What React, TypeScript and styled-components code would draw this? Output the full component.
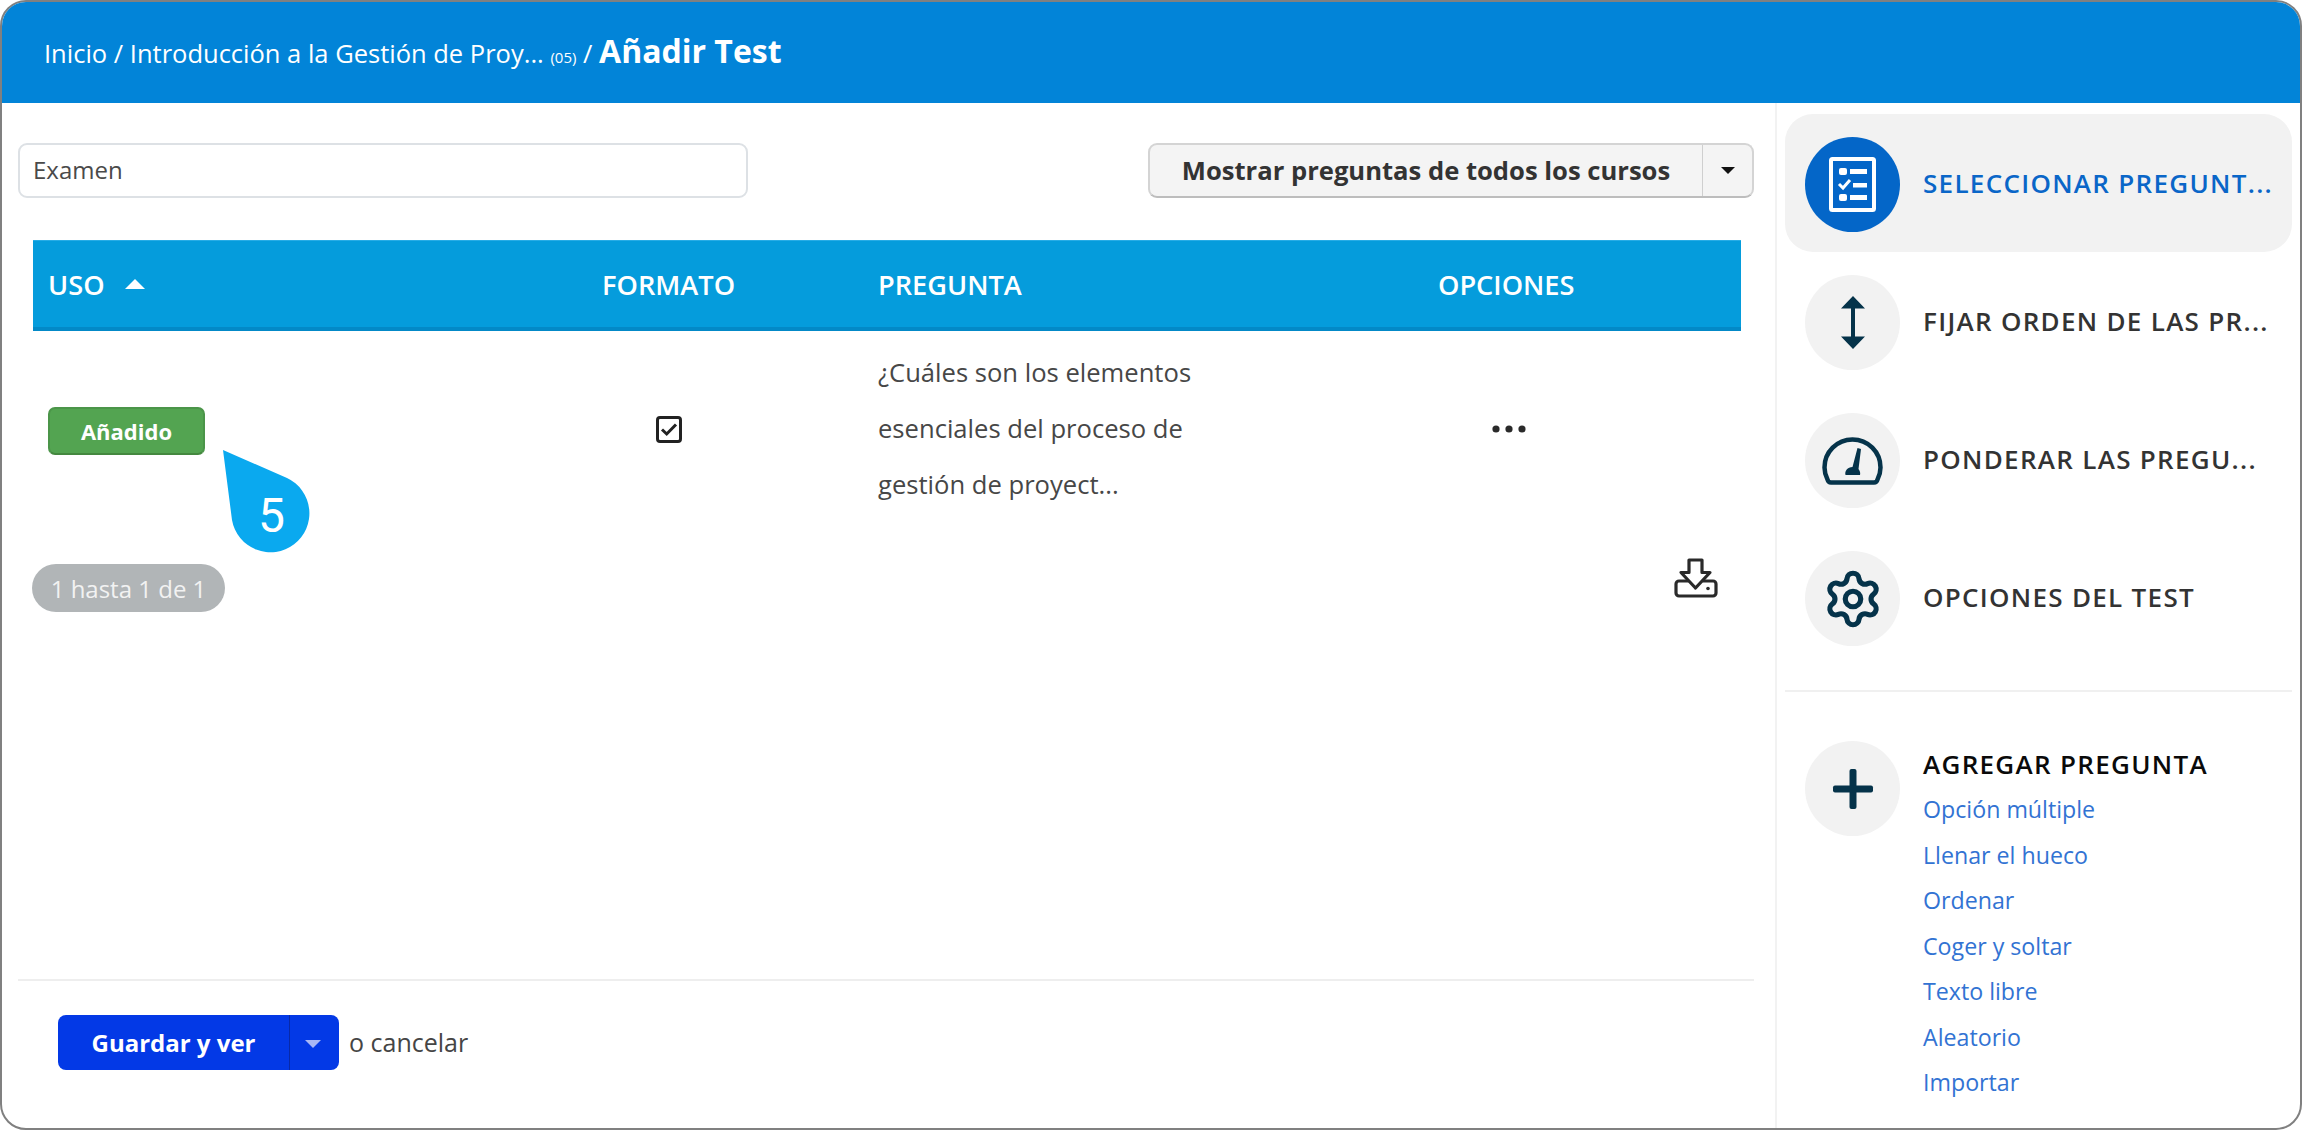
import styled, { createGlobalStyle } from "styled-components";
import { Settings } from "lucide-react";

const GlobalStyle = createGlobalStyle`
  html, body {
    margin: 0;
    padding: 0;
    background: #ffffff;
  }
  * {
    box-sizing: border-box;
  }
`;

const Frame = styled.div`
  width: 2302px;
  height: 1130px;
  border: 2px solid #808080;
  border-radius: 26px;
  overflow: hidden;
  display: flex;
  flex-direction: column;
  background: #fff;
  font-family: "Open Sans", sans-serif;
  color: #3b3b3b;
`;

const Header = styled.header`
  height: 101px;
  flex: none;
  background: #0284d8;
  color: #fff;
  display: flex;
  align-items: center;
  padding: 0 0 0 42px;
  font-size: 25.5px;
  white-space: pre;
`;

const Count = styled.span`
  font-size: 15px;
  margin-top: 8px;
`;

const CurrentPage = styled.strong`
  font-size: 32px;
  font-weight: 700;
  margin-top: -4px;
`;

const Body = styled.div`
  flex: 1;
  display: flex;
  min-height: 0;
`;

const Main = styled.main`
  width: 1773px;
  flex: none;
  padding: 40px 21px 0 16px;
  display: flex;
  flex-direction: column;
  position: relative;
`;

const Toolbar = styled.div`
  display: flex;
  justify-content: space-between;
  height: 55px;
  flex: none;
`;

const SearchInput = styled.div`
  width: 730px;
  height: 55px;
  border: 2px solid #dde1e5;
  border-radius: 9px;
  padding-left: 13px;
  font-size: 24px;
  line-height: 49px;
  color: #4a4a4a;
`;

const SplitButton = styled.div`
  display: flex;
  width: 606px;
  height: 55px;
  border: 2px solid #d4d4d4;
  border-bottom-color: #bdbdbd;
  border-radius: 9px;
  background: #f4f4f4;
  font-size: 25.6px;
  font-weight: 700;
  color: #333;
`;

const SplitLabel = styled.div`
  flex: 1;
  display: flex;
  align-items: center;
  justify-content: center;
`;

const SplitCaret = styled.div`
  width: 50px;
  border-left: 1px solid #cfcfcf;
  display: flex;
  align-items: center;
  justify-content: center;
`;

const Caret = styled.span<{ $color: string; $size: number }>`
  width: 0;
  height: 0;
  border-left: ${(p) => p.$size}px solid transparent;
  border-right: ${(p) => p.$size}px solid transparent;
  border-top: ${(p) => p.$size}px solid ${(p) => p.$color};
`;

const Table = styled.div`
  margin: 42px 13px 0 15px;
  display: grid;
  grid-template-columns: 554px 276px 560px 1fr;
`;

const HeadCell = styled.div`
  height: 91px;
  background: #059cdc;
  border-top: 1px solid #27ace6;
  border-bottom: 4px solid #0389c7;
  color: #fff;
  font-size: 27.2px;
  font-weight: 600;
  display: flex;
  align-items: center;
  gap: 20px;
  padding: 0 0 0 15px;
`;

const SortArrow = styled.span`
  width: 0;
  height: 0;
  border-left: 10px solid transparent;
  border-right: 10px solid transparent;
  border-bottom: 10px solid #fff;
`;

const RowCell = styled.div`
  height: 214px;
  display: flex;
  align-items: center;
  padding: 0 0 18px 15px;
`;

const FormatCell = styled(RowCell)`
  padding-left: 69px;
`;

const OptionsCell = styled(RowCell)`
  padding-left: 69px;
`;

const QuestionText = styled.div`
  width: 340px;
  font-size: 25.6px;
  line-height: 56px;
  color: #474747;
`;

const AddedBadge = styled.div`
  width: 157px;
  height: 48px;
  margin-top: 4px;
  border-radius: 7px;
  background: #53a451;
  border: 2px solid #4b9549;
  border-bottom-color: #44883f;
  color: #fff;
  font-size: 22px;
  font-weight: 700;
  display: flex;
  align-items: center;
  justify-content: center;
`;

const StepBubble = styled.div`
  position: absolute;
  left: 221px;
  top: 347px;
  width: 87px;
  height: 103px;
`;

const StepNumber = styled.span`
  position: absolute;
  left: 35px;
  top: 38px;
  color: #fff;
  font-family: Roboto, sans-serif;
  font-size: 48px;
  line-height: 56px;
  font-weight: 400;
`;

const Pager = styled.div`
  display: flex;
  justify-content: space-between;
  margin: 19px 0 0 14px;
  padding-right: 36px;
`;

const RangePill = styled.div`
  width: 193px;
  height: 48px;
  border-radius: 24px;
  background: #b1b5b7;
  color: #f2f2f2;
  font-size: 24px;
  display: flex;
  align-items: center;
  justify-content: center;
`;

const ExportIcon = styled.div`
  margin-top: -6px;
  width: 44px;
  height: 40px;
`;

const Footer = styled.footer`
  margin-top: auto;
  height: 149px;
  border-top: 2px solid #eeeeee;
  padding: 34px 0 0 40px;
  display: flex;
  align-items: flex-start;
  gap: 10px;
  font-size: 25px;
  color: #454545;
`;

const SaveGroup = styled.div`
  width: 281px;
  height: 55px;
  display: flex;
  background: #0339e6;
  border-radius: 8px;
  color: #fff;
  font-weight: 700;
`;

const SaveLabel = styled.div`
  flex: 1;
  display: flex;
  align-items: center;
  justify-content: center;
  font-size: 24px;
`;

const SaveCaret = styled.div`
  width: 50px;
  border-left: 1px solid #0829a8;
  display: flex;
  align-items: center;
  justify-content: center;
  padding: 2px 3px 0 0;
`;

const CancelText = styled.span`
  line-height: 55px;
`;

const Sidebar = styled.aside`
  flex: 1;
  border-left: 2px solid #f2f2f2;
  padding: 11px 8px 0 8px;
`;

const NavItem = styled.div<{ $active?: boolean }>`
  height: 138px;
  border-radius: 28px;
  padding: 0 0 0 20px;
  display: flex;
  align-items: center;
  gap: 23px;
  background: ${(p) => (p.$active ? "#f2f2f2" : "transparent")};
  color: ${(p) => (p.$active ? "#0a66c8" : "#333333")};
  font-size: 26px;
  font-weight: 600;
  letter-spacing: 1.3px;
  white-space: nowrap;
`;

const IconCircle = styled.div<{ $active?: boolean }>`
  width: 95px;
  height: 95px;
  flex: none;
  margin-top: 3px;
  border-radius: 50%;
  background: ${(p) => (p.$active ? "#0466c8" : "#f2f2f2")};
  display: flex;
  align-items: center;
  justify-content: center;
`;

const Divider = styled.hr`
  margin: 24px 0 0;
  border: 0;
  border-top: 2px solid #f0f0f0;
`;

const AddSection = styled.section`
  display: flex;
  gap: 23px;
  padding: 46px 0 0 20px;
`;

const AddList = styled.div`
  display: flex;
  flex-direction: column;
`;

const AddTitle = styled.div`
  margin: 6px 0 3px;
  font-size: 26px;
  font-weight: 600;
  letter-spacing: 1.3px;
  line-height: 40px;
  color: #0a0a0a;
`;

const AddLink = styled.a`
  font-size: 23.2px;
  line-height: 45.5px;
  color: #3273d3;
`;

const navItems = [
  { label: "SELECCIONAR PREGUNT...", active: true, icon: "list" },
  { label: "FIJAR ORDEN DE LAS PR...", active: false, icon: "order" },
  { label: "PONDERAR LAS PREGU...", active: false, icon: "gauge" },
  { label: "OPCIONES DEL TEST", active: false, icon: "gear" },
];

const addLinks = [
  "Opción múltiple",
  "Llenar el hueco",
  "Ordenar",
  "Coger y soltar",
  "Texto libre",
  "Aleatorio",
  "Importar",
];

const NavIcon = ({ name }: { name: string }) => {
  const dark = "#05334a";
  if (name === "list") {
    return (
      <svg width="47" height="55" viewBox="0 0 47 55" fill="none">
        <rect x="2" y="2" width="43" height="51" rx="1.5" stroke="#fff" strokeWidth="4" />
        <rect x="10" y="11" width="8" height="7" rx="2" fill="#fff" />
        <rect x="21" y="12" width="17" height="5" fill="#fff" />
        <path d="M10 27l4 4 7-8" stroke="#fff" strokeWidth="3" />
        <rect x="24" y="26" width="14" height="4.5" fill="#fff" />
        <rect x="10" y="37" width="8" height="7" rx="2" fill="#fff" />
        <rect x="21" y="38" width="17" height="5" fill="#fff" />
      </svg>
    );
  }
  if (name === "order") {
    return (
      <svg width="24" height="53" viewBox="0 0 24 53">
        <path d="M12 0l12 12.5H0zM12 53L0 40.5h24z" fill={dark} />
        <rect x="10" y="11" width="4" height="31" fill={dark} />
      </svg>
    );
  }
  if (name === "gauge") {
    return (
      <svg width="61" height="48" viewBox="0 0 61 48" fill="none">
        <path
          d="M9 45.5h43c2 0 3-1 3.5-3 1.500-3 3-7 3-12C58.500 15 46 2.500 30.500 2.500S2.500 15 2.500 30.500c0 5 1.500 9 3 12 .5 2 1.500 3 3.500 3z"
          stroke={dark}
          strokeWidth="4.500"
        />
        <path d="M35.500 11l3.500 1-2.500 20c1.500 2 2 4 1.500 6H23.500c-1-4 2-8 7-8z" fill={dark} />
      </svg>
    );
  }
  return <Settings size={62} color={dark} strokeWidth={2} />;
};

const Droplet = () => (
  <svg width="87" height="103" viewBox="0 0 87 103">
    <path d="M0 0L64 28A39 39 0 1 1 9 70Z" fill="#0aa9ef" />
  </svg>
);

export default function App() {
  return (
    <>
      <GlobalStyle />
      <Frame>
        <Header>
          Inicio / Introducción a la Gestión de Proy... <Count>(05)</Count> / <CurrentPage>Añadir Test</CurrentPage>
        </Header>
        <Body>
          <Main>
            <Toolbar>
              <SearchInput>Examen</SearchInput>
              <SplitButton>
                <SplitLabel>Mostrar preguntas de todos los cursos</SplitLabel>
                <SplitCaret>
                  <Caret $color="#111" $size={7} />
                </SplitCaret>
              </SplitButton>
            </Toolbar>
            <Table>
              <HeadCell>
                USO <SortArrow />
              </HeadCell>
              <HeadCell>FORMATO</HeadCell>
              <HeadCell>PREGUNTA</HeadCell>
              <HeadCell>OPCIONES</HeadCell>
              <RowCell>
                <AddedBadge>Añadido</AddedBadge>
              </RowCell>
              <FormatCell>
                <svg width="26" height="27" viewBox="0 0 26 27" fill="none">
                  <rect x="1.500" y="1.500" width="23" height="24" rx="2.500" stroke="#222" strokeWidth="3" />
                  <path d="M6 13.500l4.700 4.500L20 8.500" stroke="#222" strokeWidth="3" />
                </svg>
              </FormatCell>
              <RowCell>
                <QuestionText>
                  ¿Cuáles son los elementos esenciales del proceso de gestión de proyect...
                </QuestionText>
              </RowCell>
              <OptionsCell>
                <svg width="34" height="8" viewBox="0 0 34 8" fill="#2a2a2a">
                  <circle cx="4" cy="4" r="3.600" />
                  <circle cx="17" cy="4" r="3.600" />
                  <circle cx="30" cy="4" r="3.600" />
                </svg>
              </OptionsCell>
            </Table>
            <StepBubble>
              <Droplet />
              <StepNumber>5</StepNumber>
            </StepBubble>
            <Pager>
              <RangePill>1 hasta 1 de 1</RangePill>
              <ExportIcon>
                <svg width="44" height="40" viewBox="0 0 44 40" fill="none" stroke="#2a2a2a" strokeWidth="3.200" strokeLinejoin="round">
                  <path d="M15 2h13v12.500h8L21.500 30 7 14.500h8z" />
                  <path d="M14.500 23H5a3 3 0 0 0-3 3v9a3 3 0 0 0 3 3h34a3 3 0 0 0 3-3v-9a3 3 0 0 0-3-3H28.500" />
                  <circle cx="34" cy="30.500" r="1.800" fill="#2a2a2a" stroke="none" />
                </svg>
              </ExportIcon>
            </Pager>
            <Footer>
              <SaveGroup>
                <SaveLabel>Guardar y ver</SaveLabel>
                <SaveCaret>
                  <Caret $color="#a8b8f5" $size={8} />
                </SaveCaret>
              </SaveGroup>
              <CancelText>o cancelar</CancelText>
            </Footer>
          </Main>
          <Sidebar>
            {navItems.map((item) => (
              <NavItem key={item.label} $active={item.active}>
                <IconCircle $active={item.active}>
                  <NavIcon name={item.icon} />
                </IconCircle>
                {item.label}
              </NavItem>
            ))}
            <Divider />
            <AddSection>
              <IconCircle>
                <svg width="42" height="42" viewBox="0 0 42 42" fill="#05334a">
                  <rect x="17.500" y="1" width="7" height="40" rx="2" />
                  <rect x="1" y="17.500" width="40" height="7" rx="2" />
                </svg>
              </IconCircle>
              <AddList>
                <AddTitle>AGREGAR PREGUNTA</AddTitle>
                {addLinks.map((link) => (
                  <AddLink key={link}>{link}</AddLink>
                ))}
              </AddList>
            </AddSection>
          </Sidebar>
        </Body>
      </Frame>
    </>
  );
}
